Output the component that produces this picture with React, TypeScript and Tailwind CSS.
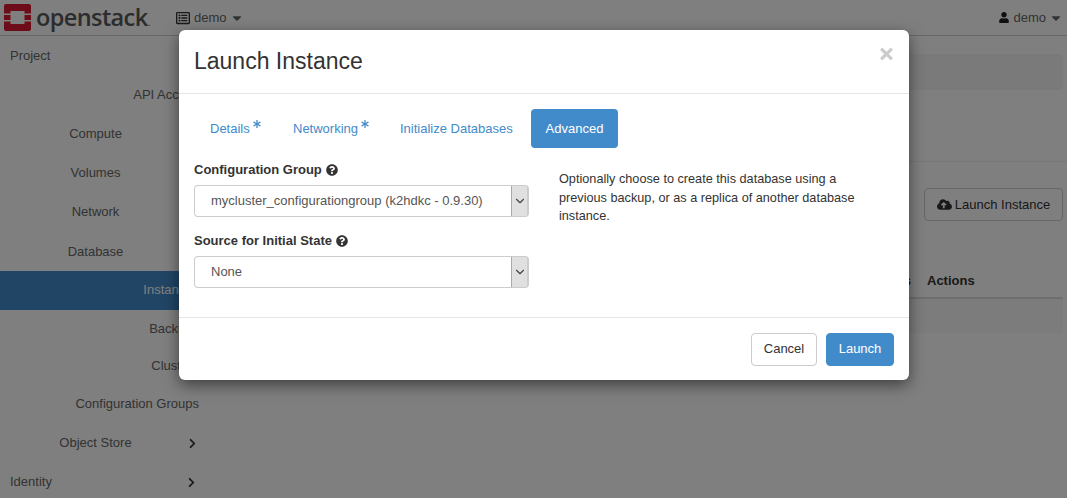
import { FaAsterisk, FaCaretDown, FaChevronRight, FaCloudUploadAlt, FaQuestionCircle, FaRegListAlt, FaTimes, FaUser } from 'react-icons/fa';
import { LuChevronDown } from 'react-icons/lu';

const NAV = [
  { label: 'Project', rowClass: 'h-[39.2px] pl-[10px]' },
  { label: 'API Access', rowClass: 'h-[39.2px] justify-end' },
  { label: 'Compute', rowClass: 'h-[39.2px] justify-center w-[191px]' },
  { label: 'Volumes', rowClass: 'h-[39.2px] justify-center w-[191px]' },
  { label: 'Network', rowClass: 'h-[39.2px] justify-center w-[191px]' },
  { label: 'Database', rowClass: 'h-[39.2px] justify-center w-[191px]' },
  { label: 'Instances', rowClass: 'h-[38.6px] justify-end bg-[#428bca] text-white' },
  { label: 'Backups', rowClass: 'h-[38px] justify-end' },
  { label: 'Clusters', rowClass: 'h-[38px] justify-end pb-px' },
  { label: 'Configuration Groups', rowClass: 'h-[38.4px] justify-end pb-px' },
];

function Caret() {
  return <FaCaretDown className="ml-[3px] h-[14px] w-[14px]" />;
}

function Logo() {
  return (
    <div className="flex w-[176px] shrink-0 items-center pl-[4px]">
      <svg width="27" height="27" viewBox="0 0 27 27" className="shrink-0">
        <path d="M2 0h23a2 2 0 0 1 2 2v7.5h-6.5V7h-14v2.500H0V2a2 2 0 0 1 2-2Z" fill="#da1a32" />
        <path d="M0 17.500h6.500V20h14v-2.500H27V25a2 2 0 0 1-2 2H2a2 2 0 0 1-2-2Z" fill="#da1a32" />
        <rect x="0" y="11" width="6.500" height="5" fill="#da1a32" />
        <rect x="20.500" y="11" width="6.500" height="5" fill="#da1a32" />
      </svg>
      <span className="ml-[5px] text-[23.500px] leading-none font-semibold tracking-[-0.6px] text-[#58585a] [font-family:'Open_Sans',sans-serif]">
        openstack<span className="text-[11px] text-[#999]">.</span>
      </span>
    </div>
  );
}

function Field({ label, value }: { label: string; value: string }) {
  return (
    <div>
      <div className="flex h-[20px] items-center gap-[4px] font-bold text-[#333]">
        {label}
        <FaQuestionCircle className="h-[12px] w-[12px] text-[#333]" />
      </div>
      <div className="mt-[5px] flex h-[32px] w-[335px] items-stretch overflow-hidden rounded-[4px] border border-r-2 border-[#ccc] text-[#555]">
        <div className="flex flex-1 items-center pl-[16px]">{value}</div>
        <div className="flex w-[16px] items-center justify-center border-l border-[#aaa] bg-[#e0e0e0]">
          <LuChevronDown className="h-[14px] w-[14px] text-[#444]" />
        </div>
      </div>
    </div>
  );
}

export default function App() {
  return (
    <div className="relative h-[498px] w-[1067px] overflow-hidden bg-white text-[13px] leading-[20px] text-[#333] [font-family:'Liberation_Sans',Arial,sans-serif]">
      <header className="flex h-[36px] items-center border-b border-[#ccc] bg-white pr-[4px] text-[#666]">
        <Logo />
        <div className="flex items-center">
          <FaRegListAlt className="mr-[4px] h-[14px] w-[14px] text-[#333]" />
          demo
          <Caret />
        </div>
        <div className="ml-auto flex items-center">
          <FaUser className="mr-[4px] h-[11px] w-[10px] text-[#222]" />
          demo
          <Caret />
        </div>
      </header>

      <div className="flex">
        <nav className="w-[199px] shrink-0 text-[#666]">
          {NAV.map(item => (
            <div key={item.label} className={`flex items-center ${item.rowClass}`}>
              {item.label}
            </div>
          ))}
          <div className="flex h-[39px] w-[199px] items-center pb-px">
            <span className="w-[191px] text-center">Object Store</span>
            <FaChevronRight className="-ml-[4px] h-[11px] w-[11px] text-[#333]" />
          </div>
          <div className="flex h-[39px] w-[199px] items-center justify-between pb-px pl-[10px] pr-[2px]">
            Identity
            <FaChevronRight className="h-[11px] w-[11px] text-[#333]" />
          </div>
        </nav>

        <main className="flex flex-1 flex-col pr-[4px]">
          <div className="mt-[18px] h-[36px] rounded-[4px] bg-[#f5f5f5]" />
          <div className="mt-[71px] h-px -mr-[4px] bg-[#eee]" />
          <div className="mt-[26px] flex justify-end">
            <button type="button" className="flex h-[33px] w-[139px] items-center justify-center rounded-[4px] border border-[#ccc] text-[#333]">
              <FaCloudUploadAlt className="mr-[3px] h-[15px] w-[15px]" />
              Launch Instance
            </button>
          </div>
          <div className="mt-[50px] flex h-[28px] items-center justify-end border-b-2 border-[#ddd] pb-[7px] font-bold text-[#333]">
            <span className="mr-[16px]">Status</span>
            <span className="w-[136px]">Actions</span>
          </div>
          <div className="h-[34px] bg-[#f9f9f9]" />
        </main>
      </div>

      <div className="absolute inset-0 bg-black/50" />

      <div className="absolute left-[179px] top-[30px] w-[730px] rounded-[6px] bg-white shadow-[0_5px_15px_rgba(0,0,0,0.5)]">
        <div className="flex h-[64px] items-center justify-between border-b border-[#e5e5e5] pb-px pl-[15px] pr-[14px]">
          <h4 className="text-[23px] leading-[26px] text-[#333]">Launch Instance</h4>
          <FaTimes className="-mt-[14px] h-[18px] w-[17px] text-[#ccc]" />
        </div>

        <div className="px-[15px] pt-[15px]">
          <ul className="flex text-[#428bca]">
            <li className="flex h-[39px] w-[84px] items-center pl-[16px]">
              Details
              <FaAsterisk className="mb-[9px] ml-[3px] h-[8px] w-[8px]" />
            </li>
            <li className="flex h-[39px] w-[107px] items-center pl-[15px]">
              Networking
              <FaAsterisk className="mb-[9px] ml-[3px] h-[8px] w-[8px]" />
            </li>
            <li className="flex h-[39px] w-[146px] items-center pl-[15px]">Initialize Databases</li>
            <li className="flex h-[39px] w-[87px] items-center justify-center rounded-[4px] bg-[#428bca] text-white">Advanced</li>
          </ul>

          <div className="mt-[12px] flex pb-[29px]">
            <div className="flex w-[335px] flex-col gap-[14px]">
              <Field label="Configuration Group" value="mycluster_configurationgroup (k2hdkc - 0.9.30)" />
              <Field label="Source for Initial State" value="None" />
            </div>
            <p className="ml-[30px] mt-[10px] w-[305px] text-[12.700px] leading-[18.500px] text-[#333]">
              Optionally choose to create this database using a previous backup, or as a replica of another database instance.
            </p>
          </div>
        </div>

        <div className="flex h-[63px] items-center justify-end gap-[9px] border-t border-[#e5e5e5] pr-[15px]">
          <button type="button" className="h-[33px] w-[66px] rounded-[4px] border border-[#ccc] bg-white text-[#333]">Cancel</button>
          <button type="button" className="h-[33px] w-[68px] rounded-[4px] border border-[#428bca] bg-[#428bca] text-white">Launch</button>
        </div>
      </div>
    </div>
  );
}
